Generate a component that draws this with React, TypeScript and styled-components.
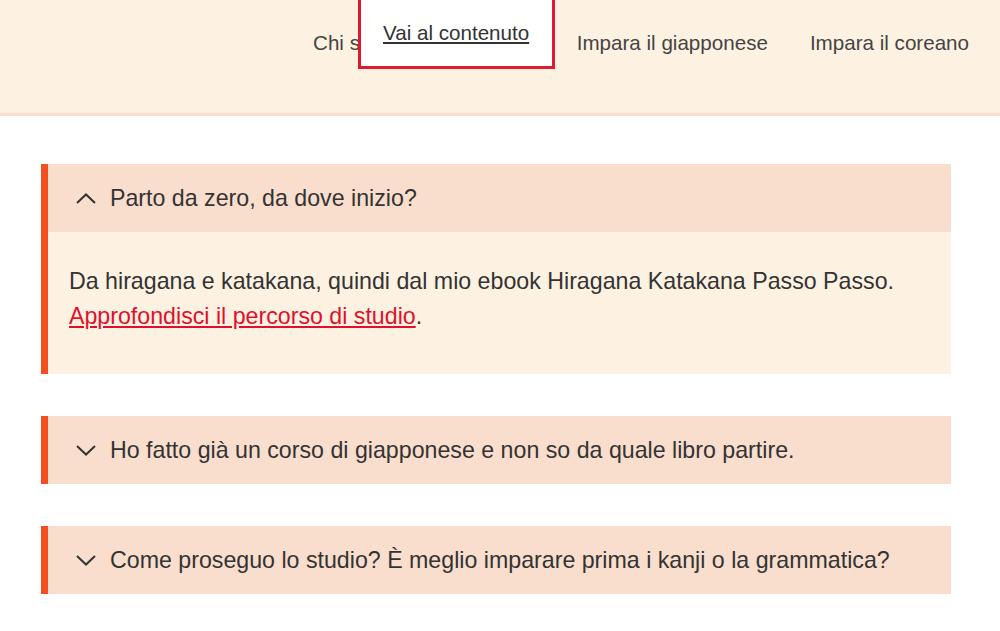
import React from "react";
import styled, { createGlobalStyle } from "styled-components";

const Global = createGlobalStyle`
  html, body { margin: 0; padding: 0; background: #ffffff; }
  body { font-family: "Liberation Sans", Arial, sans-serif; color: #333333; }
  * { box-sizing: border-box; }
`;

const Page = styled.div`
  position: relative;
  width: 1000px;
  min-height: 631px;
  overflow: hidden;
`;

const Header = styled.header`
  height: 116px;
  background: #fdf2e2;
  border-bottom: 3px solid #fbe0d0;
  display: flex;
  justify-content: flex-end;
  align-items: flex-start;
  padding: 31px 31px 0 0;
`;

const Nav = styled.nav`
  display: flex;
  gap: 42px;
`;

const NavLink = styled.a`
  font-size: 20.6px;
  line-height: 24px;
  color: #444444;
  text-decoration: none;
  white-space: nowrap;
`;

const SkipLink = styled.a`
  position: absolute;
  left: 358px;
  top: -20px;
  width: 197px;
  background: #ffffff;
  border: 3px solid #e1182f;
  padding: 38px 0 21px 22px;
  font-size: 20.6px;
  line-height: 24px;
  color: #333333;
  text-decoration: underline;
  text-underline-offset: 2px;
  z-index: 2;
`;

const Main = styled.main`
  padding: 48px 49px 40px 41px;
  display: flex;
  flex-direction: column;
  gap: 42px;
`;

const Item = styled.section`
  border-left: 7px solid #f24e1f;
`;

const ItemHeader = styled.button`
  display: flex;
  align-items: center;
  gap: 14px;
  width: 100%;
  height: 68px;
  border: 0;
  margin: 0;
  padding: 0 0 0 28px;
  background: #fadecd;
  font-family: "Liberation Sans", Arial, sans-serif;
  font-size: 23.2px;
  color: #333333;
  text-align: left;
  cursor: pointer;
`;

const Chevron = styled.svg<{ $open: boolean }>`
  flex: none;
  transform: ${(p) => (p.$open ? "none" : "rotate(180deg)")};
`;

const Panel = styled.div`
  background: #fdf2e2;
  padding: 32px 21px 40px;
  font-size: 23.2px;
  line-height: 35px;
  color: #333333;
`;

const Para = styled.p`
  margin: 0;
`;

const RedLink = styled.a`
  color: #e1102d;
  text-decoration: underline;
  text-underline-offset: 2px;
`;

const ChevronIcon = ({ open }: { open: boolean }) => (
  <Chevron $open={open} width="20" height="11" viewBox="0 0 20 11">
    <polyline
      points="1,10 10,1.5 19,10"
      fill="none"
      stroke="#333333"
      strokeWidth="2"
    />
  </Chevron>
);

const faqs = [
  {
    q: "Parto da zero, da dove inizio?",
    open: true,
  },
  {
    q: "Ho fatto già un corso di giapponese e non so da quale libro partire.",
    open: false,
  },
  {
    q: "Come proseguo lo studio? È meglio imparare prima i kanji o la grammatica?",
    open: false,
  },
];

export default function App() {
  return (
    <Page>
      <Global />
      <SkipLink href="#content">Vai al contenuto</SkipLink>
      <Header>
        <Nav>
          <NavLink href="#">Chi sono</NavLink>
          <NavLink href="#">I miei corsi</NavLink>
          <NavLink href="#">Impara il giapponese</NavLink>
          <NavLink href="#">Impara il coreano</NavLink>
        </Nav>
      </Header>
      <Main id="content">
        {faqs.map((f) => (
          <Item key={f.q}>
            <ItemHeader>
              <ChevronIcon open={f.open} />
              <span>{f.q}</span>
            </ItemHeader>
            {f.open && (
              <Panel>
                <Para>
                  Da hiragana e katakana, quindi dal mio ebook Hiragana Katakana Passo Passo.{" "}
                  <RedLink href="#">Approfondisci il percorso di studio</RedLink>.
                </Para>
              </Panel>
            )}
          </Item>
        ))}
      </Main>
    </Page>
  );
}
